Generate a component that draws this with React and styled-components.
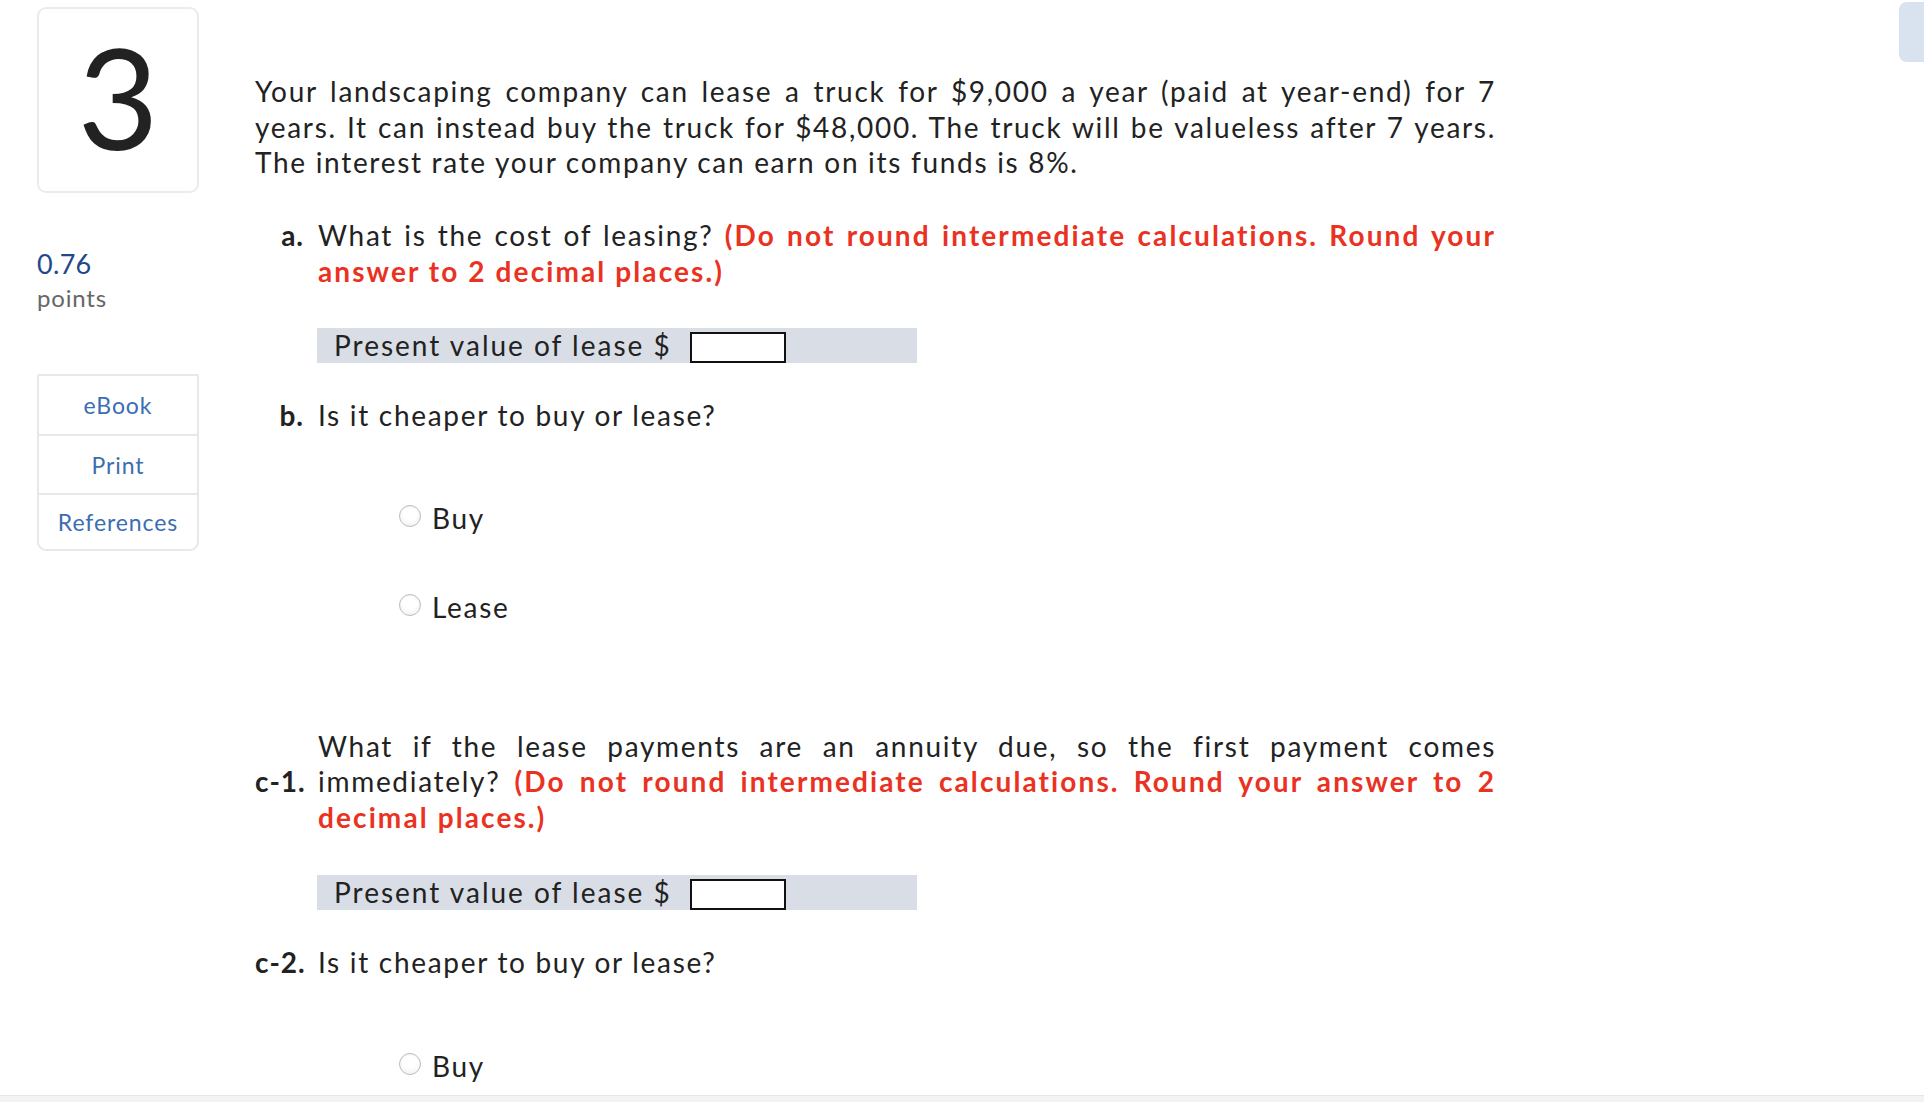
import React from 'react';
import styled, { createGlobalStyle } from 'styled-components';

const GlobalStyle = createGlobalStyle`
  html, body {
    margin: 0;
    padding: 0;
    background: #ffffff;
    overflow: hidden;
  }
  body {
    font-family: Lato, "Open Sans", Arial, sans-serif;
    color: #222222;
  }
`;

const Page = styled.div`
  display: flex;
  align-items: flex-start;
  gap: 56px;
  padding-left: 37px;
  height: 1102px;
  box-sizing: border-box;
`;

const Sidebar = styled.aside`
  width: 162px;
  flex: none;
  display: flex;
  flex-direction: column;
  padding-top: 7px;
`;

const NumberBox = styled.div`
  height: 186px;
  box-sizing: border-box;
  border: 2px solid #ebebeb;
  border-radius: 9px;
  display: flex;
  align-items: center;
  justify-content: center;
  font-size: 140px;
  line-height: 1;
  color: #222;
  padding-bottom: 8px;
`;

const Score = styled.div`
  margin-top: 55px;
  font-size: 27px;
  line-height: 32px;
  letter-spacing: 0.3px;
  color: #1f4a8a;
`;

const ScoreUnit = styled.div`
  margin-top: 3px;
  font-size: 24px;
  line-height: 30px;
  letter-spacing: 0.8px;
  color: #666666;
`;

const LinkList = styled.nav`
  margin-top: 61px;
  border: 2px solid #e8e8e8;
  border-radius: 2px 2px 9px 9px;
  display: flex;
  flex-direction: column;
`;

const LinkItem = styled.a`
  height: ${p => p.$h}px;
  display: flex;
  align-items: center;
  justify-content: center;
  font-size: 23px;
  letter-spacing: 0.9px;
  color: #3b6db3;
  text-decoration: none;
  border-top: ${p => (p.$first ? 'none' : '2px solid #e8e8e8')};
  cursor: pointer;
`;

const Main = styled.main`
  width: 1241px;
  padding-top: 74px;
  font-size: 28px;
  line-height: 35.5px;
  letter-spacing: 1.7px;
`;

const Line = styled.span`
  display: block;
  text-align: justify;
  text-align-last: ${p => (p.$last ? 'left' : 'justify')};
  white-space: nowrap;
`;

const Red = styled.span`
  color: #ea3222;
  font-weight: 700;
  letter-spacing: 2.1px;
`;

const Question = styled.div`
  display: grid;
  grid-template-columns: 49px 1fr;
  column-gap: 14px;
  align-items: ${p => (p.$center ? 'center' : 'start')};
  margin-top: ${p => p.$mt}px;
`;

const Label = styled.span`
  font-weight: 700;
  letter-spacing: 1px;
  text-align: right;
  white-space: nowrap;
`;

const AnswerBar = styled.div`
  margin-top: ${p => p.$mt}px;
  margin-left: 62px;
  width: 600px;
  height: 35px;
  background: #d8dde6;
  display: flex;
  align-items: center;
  gap: 18px;
  padding-left: 17px;
  box-sizing: border-box;
  letter-spacing: 2px;
`;

const AnswerInput = styled.input`
  align-self: flex-end;
  width: 96px;
  height: 31px;
  box-sizing: border-box;
  border: 2px solid #111;
  background: #fff;
  margin: 0;
  padding: 0 4px;
  font: inherit;
  font-size: 20px;
`;

const RadioRow = styled.label`
  display: flex;
  align-items: center;
  gap: 11px;
  margin-top: ${p => p.$mt}px;
  margin-left: 144px;
  cursor: pointer;
`;

const RadioDot = styled.span`
  width: 20px;
  height: 20px;
  border-radius: 50%;
  border: 1px solid #bdbdbd;
  background: radial-gradient(circle at 50% 35%, #ffffff 40%, #ececec 100%);
  box-shadow: inset 0 1px 1px rgba(0, 0, 0, 0.05);
  margin-top: -5px;
  flex: none;
`;

const SideTab = styled.div`
  position: fixed;
  top: 2px;
  right: 0;
  width: 25px;
  height: 60px;
  background: #d9e2ef;
  border-radius: 8px 0 0 8px;
`;

const FooterEdge = styled.div`
  position: fixed;
  left: 0;
  right: 0;
  bottom: 0;
  height: 6px;
  background: #f3f3f3;
  border-top: 1px solid #e6e6e6;
`;

const Radio = ({ label, mt }) => (
  <RadioRow $mt={mt}>
    <RadioDot />
    <span>{label}</span>
  </RadioRow>
);

const PresentValue = ({ mt }) => (
  <AnswerBar $mt={mt}>
    <span>Present value of lease $</span>
    <AnswerInput type="text" aria-label="Present value of lease" />
  </AnswerBar>
);

export default function App() {
  return (
    <>
      <GlobalStyle />
      <Page>
        <Sidebar>
          <NumberBox>3</NumberBox>
          <Score>0.76</Score>
          <ScoreUnit>points</ScoreUnit>
          <LinkList>
            <LinkItem $first $h={58}>eBook</LinkItem>
            <LinkItem $h={57}>Print</LinkItem>
            <LinkItem $h={54}>References</LinkItem>
          </LinkList>
        </Sidebar>

        <Main>
          <div>
            <Line>Your landscaping company can lease a truck for $9,000 a year (paid at year-end) for 7</Line>
            <Line>years. It can instead buy the truck for $48,000. The truck will be valueless after 7 years.</Line>
            <Line $last>The interest rate your company can earn on its funds is 8%.</Line>
          </div>

          <Question $mt={37.5}>
            <Label>a.</Label>
            <div>
              <Line>
                What is the cost of leasing? <Red>(Do not round intermediate calculations. Round your</Red>
              </Line>
              <Line $last>
                <Red>answer to 2 decimal places.)</Red>
              </Line>
            </div>
          </Question>

          <PresentValue mt={39} />

          <Question $mt={35}>
            <Label>b.</Label>
            <Line $last>Is it cheaper to buy or lease?</Line>
          </Question>

          <Radio label="Buy" mt={67} />
          <Radio label="Lease" mt={54} />

          <Question $mt={103} $center>
            <Label>c-1.</Label>
            <div>
              <Line>What if the lease payments are an annuity due, so the first payment comes</Line>
              <Line>
                immediately? <Red>(Do not round intermediate calculations. Round your answer to 2</Red>
              </Line>
              <Line $last>
                <Red>decimal places.)</Red>
              </Line>
            </div>
          </Question>

          <PresentValue mt={40} />

          <Question $mt={35}>
            <Label>c-2.</Label>
            <Line $last>Is it cheaper to buy or lease?</Line>
          </Question>

          <Radio label="Buy" mt={68} />
        </Main>
      </Page>
      <SideTab />
      <FooterEdge />
    </>
  );
}
